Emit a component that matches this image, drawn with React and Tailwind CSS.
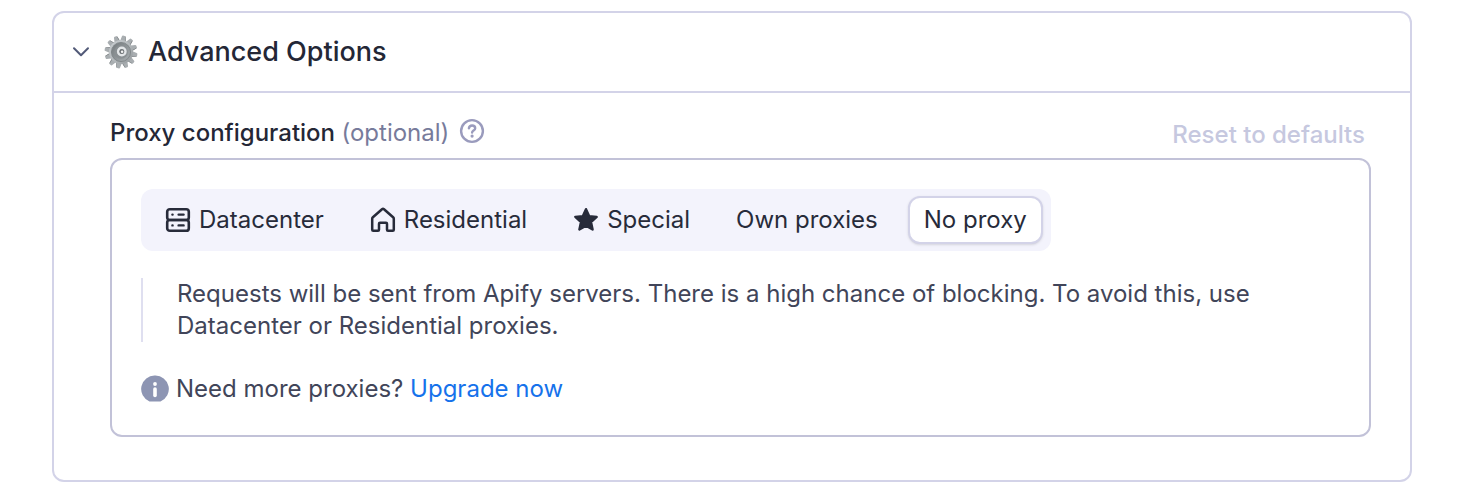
import { useState } from 'react';

const ChevronIcon = ({ open }) => (
  <svg
    width="18"
    height="12"
    viewBox="0 0 18 12"
    fill="none"
    stroke="currentColor"
    strokeWidth="2"
    strokeLinecap="round"
    strokeLinejoin="round"
    className={open ? '' : '-rotate-90'}
    aria-hidden="true"
  >
    <path d="M2 2.2l7 7 7-7" />
  </svg>
);

const teeth = [0, 1, 2, 3, 4, 5, 6, 7, 8, 9, 10, 11];

const GearIcon = () => (
  <svg width="34" height="34" viewBox="0 0 34 34" aria-hidden="true">
    <defs>
      <linearGradient id="gearBody" x1="0" y1="0" x2="1" y2="1">
        <stop offset="0" stopColor="#c9ced1" />
        <stop offset="0.55" stopColor="#b2b7ba" />
        <stop offset="1" stopColor="#8f9497" />
      </linearGradient>
      <linearGradient id="gearDish" x1="0" y1="0" x2="1" y2="1">
        <stop offset="0" stopColor="#73797c" />
        <stop offset="1" stopColor="#a9afb2" />
      </linearGradient>
    </defs>
    {teeth.map((t) => (
      <g key={t} transform={`rotate(${t * 30 + 10} 17 17)`}>
        <path d="M14 7l1.200-5.600q.2-.9 1-.9h1.600q.8 0 1 .9L20 7z" fill="#a9aeb1" />
        <path d="M18.200.7l1.100 6h.6l-1-5.300q-.1-.6-.7-.7z" fill="#74797c" />
      </g>
    ))}
    <circle cx="17" cy="17" r="12" fill="url(#gearBody)" />
    <circle cx="17" cy="17" r="9.6" fill="url(#gearDish)" stroke="#7b8184" strokeWidth="0.8" />
    <circle cx="17" cy="17" r="6.800" fill="#8a9093" />
    <circle cx="17.8" cy="16.500" r="3.700" fill="#8a9093" stroke="#e3e6e8" strokeWidth="2.400" />
    <circle cx="17.8" cy="16.500" r="2.300" fill="#6a6f72" />
    <circle cx="18.100" cy="16.800" r="1.300" fill="#f4f5f5" />
  </svg>
);

const HelpIcon = () => (
  <svg width="26" height="26" viewBox="0 0 26 26" fill="none" stroke="currentColor" strokeWidth="2.4" strokeLinecap="round" strokeLinejoin="round" aria-hidden="true">
    <circle cx="13" cy="13" r="10.9" />
    <path d="M9.9 10.2c.3-1.7 1.5-2.7 3.2-2.7 1.8 0 3.1 1.1 3.1 2.7 0 2.3-3.1 2.4-3.1 4.3" />
    <circle cx="13.1" cy="18.1" r="1.6" fill="currentColor" stroke="none" />
  </svg>
);

const DatacenterIcon = () => (
  <svg width="26" height="26" viewBox="0 0 26 26" fill="none" stroke="currentColor" strokeWidth="2.6" strokeLinecap="round" aria-hidden="true">
    <rect x="2.2" y="2.2" width="21.6" height="10.8" rx="2.6" />
    <rect x="2.2" y="13" width="21.6" height="10.8" rx="2.6" />
    <path d="M7.4 7.6h.2M13.6 7.6h5M7.4 18.4h.2M13.6 18.4h5" strokeWidth="2.4" />
  </svg>
);

const HomeIcon = () => (
  <svg width="26" height="26" viewBox="0 0 26 26" fill="none" stroke="currentColor" strokeWidth="2.5" strokeLinecap="round" strokeLinejoin="round" aria-hidden="true">
    <path d="M2.2 11.700q0-.9.700-1.500l9.100-8q1-.8 2 0l9.100 8q.7.6.7 1.500v11.100q0 1-1 1h-4.800q-1 0-1-1v-6q0-1-1-1h-6q-1 0-1 1v6q0 1-1 1H3.200q-1 0-1-1z" />
  </svg>
);

const StarIcon = () => (
  <svg width="26" height="26" viewBox="0 0 26 26" fill="currentColor" stroke="currentColor" strokeWidth="2.4" strokeLinejoin="round" aria-hidden="true">
    <path d="M13 2.200l3.100 6.900 7.600.8-5.700 5.100 1.600 7.500-6.600-3.800-6.600 3.800L8 15l-5.700-5.100 7.600-.8z" />
  </svg>
);

const InfoIcon = () => (
  <svg width="28" height="28" viewBox="0 0 28 28" aria-hidden="true">
    <path d="M14 .6A13.400 13.400 0 0 0 8.500 26.400h11A13.400 13.400 0 0 0 14 .6z" fill="#8d95b3" />
    <circle cx="14" cy="9" r="1.9" fill="#fff" />
    <path d="M14 14v6.400" stroke="#fff" strokeWidth="3.600" strokeLinecap="round" />
  </svg>
);

const proxyTypes = [
  { id: 'datacenter', label: 'Datacenter', icon: DatacenterIcon },
  { id: 'residential', label: 'Residential', icon: HomeIcon },
  { id: 'special', label: 'Special', icon: StarIcon },
  { id: 'own', label: 'Own proxies' },
  { id: 'none', label: 'No proxy' },
];

const ProxyTabs = ({ value, onChange }) => (
  <div role="tablist" aria-label="Proxy type" className="flex w-fit gap-3.5 rounded-xl bg-[#f3f3fc] px-2 py-[7px]">
    {proxyTypes.map(({ id, label, icon: Icon }) => (
      <button
        key={id}
        type="button"
        role="tab"
        aria-selected={value === id}
        onClick={() => onChange(id)}
        className={`flex h-12 items-center gap-2 rounded-xl border-2 px-3.5 whitespace-nowrap text-[#272b3a] ${
          value === id ? 'border-[#d3d3e8] bg-white shadow-sm' : 'border-transparent'
        }`}
      >
        {Icon && <Icon />}
        {label}
      </button>
    ))}
  </div>
);

const App = () => {
  const [open, setOpen] = useState(true);
  const [proxy, setProxy] = useState('none');

  return (
    <main className="bg-white py-[11px] pr-[50px] pl-[52px] font-['Inter',sans-serif] text-2xl leading-8 text-[#414559]">
      <section className="rounded-xl border-2 border-[#d3d3e8]">
        <h2>
          <button
            type="button"
            aria-expanded={open}
            onClick={() => setOpen(!open)}
            className="flex h-[78px] w-full items-center px-[18px] text-[27px] font-medium text-[#242736]"
          >
            <span className="text-[#525a78]">
              <ChevronIcon open={open} />
            </span>
            <span className="mr-2.5 ml-3.5">
              <GearIcon />
            </span>
            Advanced Options
          </button>
        </h2>

        {open && (
          <div className="border-t-2 border-[#d3d3e8] pt-6 pr-[39px] pb-[43px] pl-14">
            <div className="flex items-start justify-between pr-1.5">
              <div className="flex items-center">
                <h3 className="font-medium text-[#242736]">
                  Proxy configuration <span className="font-normal text-[#777b9b]">(optional)</span>
                </h3>
                <button type="button" aria-label="Help" className="mb-1 ml-2.5 text-[#9a9bbd]">
                  <HelpIcon />
                </button>
              </div>
              <button type="button" className="pt-0.5 font-medium text-[#c6c8df]">
                Reset to defaults
              </button>
            </div>

            <div className="mt-[7px] rounded-xl border-2 border-[#c2c2d8] px-[29px] pt-[29px] pb-[30px]">
              <ProxyTabs value={proxy} onChange={setProxy} />
              <p className="mt-[27px] border-l-2 border-[#dfdff0] pr-16 pl-[34px]">
                Requests will be sent from Apify servers. There is a high chance of blocking. To avoid this, use
                Datacenter or Residential proxies.
              </p>
              <div className="mt-[31px] flex items-center gap-[7px]">
                <InfoIcon />
                <p>
                  Need more proxies?{' '}
                  <a href="#upgrade" className="text-[#1672eb]">
                    Upgrade now
                  </a>
                </p>
              </div>
            </div>
          </div>
        )}
      </section>
    </main>
  );
};

export default App;
